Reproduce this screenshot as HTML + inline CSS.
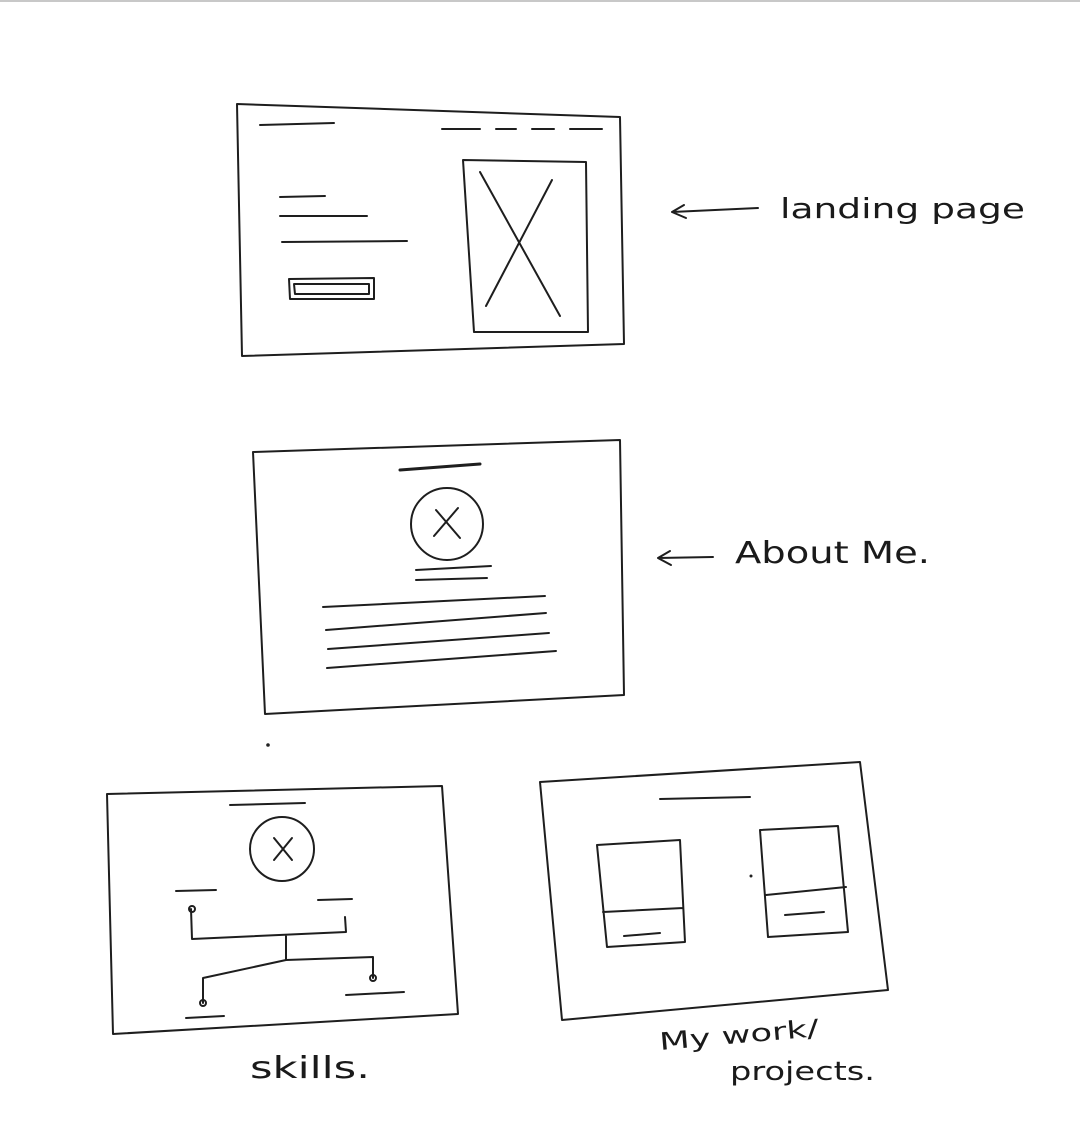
<!DOCTYPE html>
<html><head><meta charset="utf-8"><style>
html,body{margin:0;padding:0;background:#fff;}
svg{display:block}
text{font-family:"DejaVu Sans","Liberation Sans",sans-serif;fill:#1a1a1a}
</style></head><body>
<svg width="1080" height="1138" viewBox="0 0 1080 1138" xmlns="http://www.w3.org/2000/svg">
<rect x="0" y="0" width="1080" height="2" fill="#c8c8c8"/>
<g fill="none" stroke="#1e1e1e" stroke-width="2" stroke-linecap="round" stroke-linejoin="round">
<path d="M237 104 L620 117 L624 344 L242 356 Z"/>
<path d="M260 125 L334 123"/>
<path d="M442 129 L480 129 M496 129 L516 129 M532 129 L554 129 M570 129 L602 129"/>
<path d="M463 160 L586 162 L588 332 L474 332 Z"/>
<path d="M480 172 L560 316 M552 180 L486 306"/>
<path d="M280 197 L325 196 M280 216 L367 216 M282 242 L407 241"/>
<path d="M289 279 L374 278 L374 299 L290 299 Z M294 284 L369 284 L369 294 L295 294 Z"/>
<path d="M672 212 L758 208 M672 212 L684 205 M672 212 L686 218"/>
<path d="M253 452 L620 440 L624 695 L265 714 Z"/>
<path d="M400 470 L480 464" stroke-width="3"/>
<circle cx="447" cy="524" r="36"/>
<path d="M436 510 L460 538 M458 508 L434 536"/>
<path d="M416 570 L491 566 M416 580 L487 578"/>
<path d="M323 607 L545 596 M326 630 L546 613 M328 649 L549 633 M327 668 L556 651"/>
<path d="M658 558 L713 557 M658 558 L670 551 M658 558 L671 565"/>
<path d="M107 794 L442 786 L458 1014 L113 1034 Z"/>
<path d="M230 805 L305 803"/>
<circle cx="282" cy="849" r="32"/>
<path d="M274 838 L292 860 M292 838 L274 860"/>
<path d="M176 891 L216 890 M318 900 L352 899"/>
<path d="M191 909 L192 939 L346 932 L345 917 M286 936 L286 960 L203 978 L203 1003 M286 960 L373 957 L373 978"/>
<circle cx="192" cy="909" r="3"/><circle cx="203" cy="1003" r="3"/><circle cx="373" cy="978" r="3"/>
<path d="M186 1018 L224 1016 M346 995 L404 992"/>
<path d="M540 782 L860 762 L888 990 L562 1020 Z"/>
<path d="M660 799 L750 797"/>
<path d="M597 845 L680 840 L685 942 L607 947 Z M603 912 L683 908 M624 936 L660 933"/>
<path d="M760 830 L838 826 L848 932 L768 937 Z M766 895 L846 887 M785 915 L824 912"/>
</g>
<circle cx="268" cy="745" r="1.8" fill="#222"/>
<circle cx="751" cy="876" r="1.5" fill="#222"/>
<text x="780" y="218" font-size="28" textLength="245" lengthAdjust="spacingAndGlyphs">landing page</text>
<text x="735" y="563" font-size="30" textLength="195" lengthAdjust="spacingAndGlyphs">About Me.</text>
<text x="250" y="1078" font-size="30" textLength="120" lengthAdjust="spacingAndGlyphs">skills.</text>
<text x="660" y="1050" font-size="24" textLength="160" lengthAdjust="spacingAndGlyphs" transform="rotate(-5 660 1050)">My work/</text>
<text x="730" y="1080" font-size="26" fill="#333" textLength="145" lengthAdjust="spacingAndGlyphs">projects.</text>
</svg>
</body></html>
